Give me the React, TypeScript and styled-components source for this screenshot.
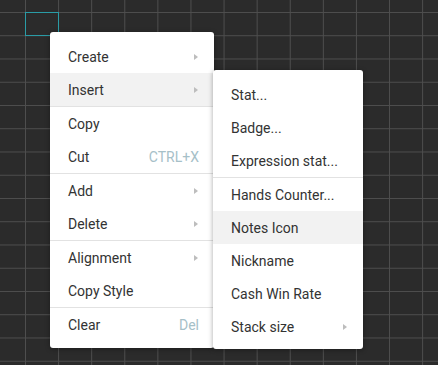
import styled, { createGlobalStyle } from 'styled-components';

const Global = createGlobalStyle`
  html, body {
    margin: 0;
    padding: 0;
    background: #2b2b2b;
  }
  body {
    font-family: Roboto, "Liberation Sans", sans-serif;
  }
`;

const Canvas = styled.div`
  position: relative;
  width: 438px;
  height: 365px;
  overflow: hidden;
  background-color: #2b2b2b;
  background-image:
    linear-gradient(to right, #4e4e4e 1px, transparent 1px),
    linear-gradient(to bottom, #4e4e4e 1px, transparent 1px);
  background-size: 33.1px 23.25px;
  background-position: 25px 12px;
`;

const SelectedCell = styled.div`
  position: absolute;
  left: 25px;
  top: 12px;
  width: 32px;
  height: 22px;
  border: 1px solid #2a9ca6;
`;

const Menu = styled.ul<{ $left: number; $top: number; $width: number; $bottomPad: number }>`
  position: absolute;
  left: ${p => p.$left}px;
  top: ${p => p.$top}px;
  width: ${p => p.$width}px;
  margin: 0;
  padding: 8px 0 ${p => p.$bottomPad}px;
  list-style: none;
  background: #ffffff;
  border-radius: 3px;
  box-shadow: 0 1px 5px rgba(0, 0, 0, 0.35);
`;

const Item = styled.li<{ $active?: boolean }>`
  display: flex;
  align-items: center;
  justify-content: space-between;
  height: 33px;
  padding: 0 15px 0 18px;
  font-size: 14px;
  color: #333333;
  background: ${p => (p.$active ? '#f2f2f2' : 'transparent')};
  white-space: nowrap;
`;

const Separator = styled.li`
  height: 1px;
  background: #e2e2e2;
`;

const Arrow = styled.span`
  width: 0;
  height: 0;
  border-top: 3.5px solid transparent;
  border-bottom: 3.5px solid transparent;
  border-left: 4px solid #bdbdbd;
  margin-right: 1px;
`;

const Shortcut = styled.span`
  color: #a6c0c8;
  font-size: 14px;
`;

type Entry =
  | { sep: true }
  | { label: string; sub?: boolean; active?: boolean; shortcut?: string };

const mainItems: Entry[] = [
  { label: 'Create', sub: true },
  { label: 'Insert', sub: true, active: true },
  { sep: true },
  { label: 'Copy' },
  { label: 'Cut', shortcut: 'CTRL+X' },
  { sep: true },
  { label: 'Add', sub: true },
  { label: 'Delete', sub: true },
  { sep: true },
  { label: 'Alignment', sub: true },
  { label: 'Copy Style' },
  { sep: true },
  { label: 'Clear', shortcut: 'Del' },
];

const insertItems: Entry[] = [
  { label: 'Stat...' },
  { label: 'Badge...' },
  { label: 'Expression stat...' },
  { sep: true },
  { label: 'Hands Counter...' },
  { label: 'Notes Icon', active: true },
  { label: 'Nickname' },
  { label: 'Cash Win Rate' },
  { label: 'Stack size', sub: true },
];

function renderItems(items: Entry[]) {
  return items.map((it, i) =>
    'sep' in it ? (
      <Separator key={i} />
    ) : (
      <Item key={i} $active={it.active}>
        <span>{it.label}</span>
        {it.sub && <Arrow />}
        {it.shortcut && <Shortcut>{it.shortcut}</Shortcut>}
      </Item>
    )
  );
}

export default function App() {
  return (
    <>
      <Global />
      <Canvas>
        <SelectedCell />
        <Menu $left={50} $top={32} $width={164} $bottomPad={7}>
          {renderItems(mainItems)}
        </Menu>
        <Menu $left={213} $top={70} $width={150} $bottomPad={6}>
          {renderItems(insertItems)}
        </Menu>
      </Canvas>
    </>
  );
}
